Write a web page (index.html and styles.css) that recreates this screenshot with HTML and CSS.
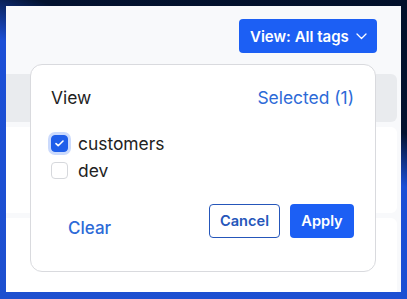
FILE: index.html
```html
<!DOCTYPE html>
<html lang="en">
<head>
    <meta charset="UTF-8">
    <meta name="viewport" content="width=device-width, initial-scale=1.0">
    <title>Tag filter</title>
    <link rel="stylesheet" href="styles.css">
</head>
<body>
    <div class="app">
        <div class="toolbar">
            <button class="view-button">
                View: All tags
                <svg class="chevron" width="11" height="7" viewBox="0 0 11 7"><path d="M1 1l4.5 4.5L10 1" fill="none" stroke="#fff" stroke-width="1.3" stroke-linecap="round" stroke-linejoin="round"/></svg>
            </button>
        </div>

        <div class="rows">
            <div class="row row-head"></div>
            <div class="row"></div>
            <div class="row row-last"></div>
        </div>

        <div class="popover">
            <div class="popover-head">
                <span class="popover-title">View</span>
                <span class="selected-count">Selected (1)</span>
            </div>

            <div class="tag-list">
                <label class="tag">
                    <span class="box checked">
                        <svg width="9" height="7" viewBox="0 0 9 7"><path d="M1 3.6l2.2 2.1L8 1" fill="none" stroke="#fff" stroke-width="1.6" stroke-linecap="round" stroke-linejoin="round"/></svg>
                    </span>
                    customers
                </label>
                <label class="tag">
                    <span class="box"></span>
                    dev
                </label>
            </div>

            <div class="popover-foot">
                <button class="clear-button">Clear</button>
                <div class="actions">
                    <button class="cancel-button">Cancel</button>
                    <button class="apply-button">Apply</button>
                </div>
            </div>
        </div>
    </div>
</body>
</html>
```

FILE: styles.css
```css
body {
    margin: 0;
    height: 299px;
    overflow: hidden;
    font-family: Inter, "Liberation Sans", sans-serif;
    background: linear-gradient(200deg, #02102a 0%, #03122f 30%, #1b4fd6 42%, #1d4fcf 100%);
    padding: 6px 6px 7px 6px;
    box-sizing: border-box;
}
.app {
    position: relative;
    height: 286px;
    background-color: #f8f9fb;
    overflow: hidden;
}
.toolbar {
    display: flex;
    justify-content: flex-end;
    padding: 13px 24px 0 0;
    height: 55px;
}
.view-button {
    display: flex;
    align-items: center;
    gap: 7px;
    width: 138px;
    height: 34px;
    padding: 0 0 0 11px;
    background-color: #1c5ff4;
    color: white;
    border: none;
    border-radius: 4px;
    font-family: inherit;
    font-size: 15px;
    font-weight: 600;
}
.chevron {
    margin-top: 1px;
}
.rows {
    display: flex;
    flex-direction: column;
    gap: 5px;
    margin-right: 4px;
}
.row {
    height: 86px;
    background-color: white;
    border-radius: 0 6px 6px 0;
}
.row-head {
    height: 48px;
    background-color: #e9ebee;
}
.row-last {
    height: 80px;
}
.popover {
    position: absolute;
    left: 24px;
    top: 58px;
    width: 346px;
    height: 208px;
    box-sizing: border-box;
    background-color: white;
    border: 1px solid #d9dade;
    border-radius: 12px;
    padding: 21px 21px 0 20px;
}
.popover-head {
    display: flex;
    justify-content: space-between;
    line-height: 24px;
    font-size: 17.4px;
}
.popover-title {
    color: #222;
}
.selected-count {
    color: #2d6ad7;
}
.tag-list {
    margin-top: 20px;
}
.tag {
    display: flex;
    align-items: center;
    gap: 10px;
    height: 27px;
    font-size: 17.4px;
    color: #222;
}
.box {
    width: 17px;
    height: 17px;
    box-sizing: border-box;
    border: 1px solid #d6d8dc;
    border-radius: 4px;
    display: flex;
    align-items: center;
    justify-content: center;
}
.box.checked {
    background-color: #1f5eea;
    border-color: #1f5eea;
    box-shadow: 0 0 0 3px #cbdafc;
}
.popover-foot {
    display: flex;
    justify-content: space-between;
    align-items: flex-end;
    margin-top: 20px;
}
.clear-button {
    background: none;
    border: none;
    padding: 0 0 0 17px;
    line-height: 20px;
    font-family: inherit;
    font-size: 17px;
    font-weight: 500;
    color: #2d6ad7;
}
.actions {
    display: flex;
    gap: 10px;
}
.cancel-button,
.apply-button {
    height: 34px;
    padding: 0;
    border-radius: 4px;
    font-family: inherit;
    font-size: 14.6px;
    font-weight: 600;
}
.cancel-button {
    width: 71px;
    background-color: white;
    border: 1px solid #2556ba;
    color: #2556ba;
}
.apply-button {
    width: 64px;
    background-color: #1c5ff4;
    border: none;
    color: white;
}
```
